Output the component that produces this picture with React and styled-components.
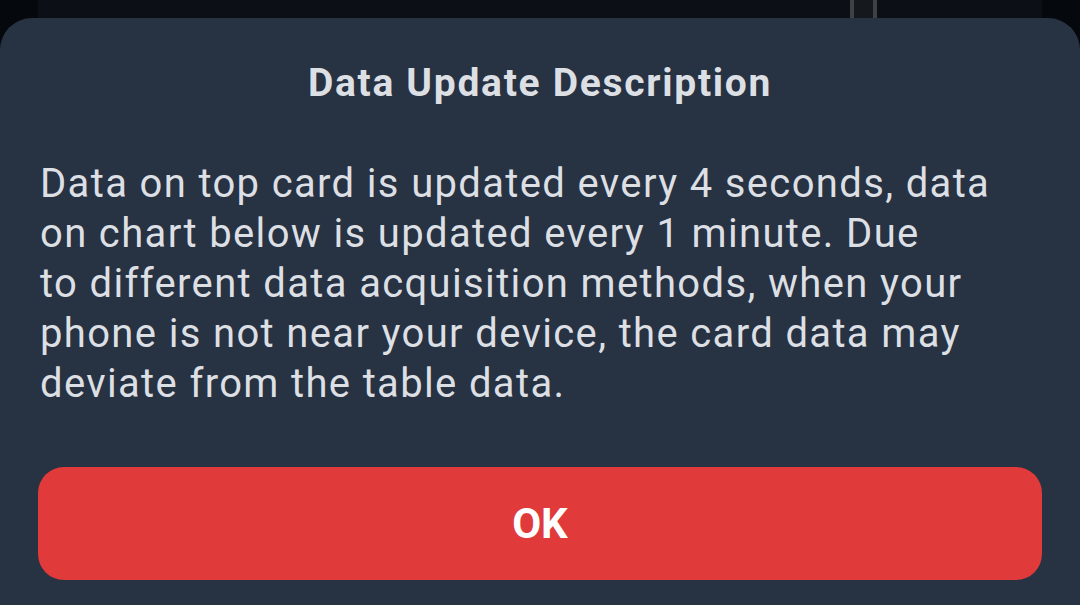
import React from 'react';
import styled, { createGlobalStyle } from 'styled-components';

const GlobalStyle = createGlobalStyle`
  html, body {
    margin: 0;
    padding: 0;
    background: #05080c;
  }
  body {
    font-family: Roboto, 'Noto Sans', sans-serif;
  }
`;

const Screen = styled.div`
  width: 1080px;
  height: 605px;
  display: flex;
  flex-direction: column;
  overflow: hidden;
  background: #05080c;
`;

// the page behind the sheet peeks out at the top
const Backdrop = styled.div`
  height: 18px;
  margin: 0 38px;
  background: #0c1016;
  display: flex;
  flex-shrink: 0;
`;

const ChartStub = styled.div`
  width: 19px;
  margin-left: 812px;
  background: #15181c;
  border-left: 4px solid #3e4246;
  border-right: 4px solid #3e4246;
`;

const Sheet = styled.div`
  flex: 1;
  background: #273242;
  border-radius: 32px 32px 0 0;
  padding: 45px 38px 0 38px;
  display: flex;
  flex-direction: column;
`;

const Title = styled.h2`
  margin: 0;
  font-size: 39px;
  line-height: 40px;
  font-weight: 700;
  letter-spacing: 1.7px;
  color: #dcdfe3;
  text-align: center;
`;

const Body = styled.p`
  margin: 56px 0 0 2px;
  font-size: 40px;
  line-height: 50px;
  font-weight: 400;
  letter-spacing: 1.35px;
  color: #dcdfe3;
  white-space: nowrap;
`;

const OkButton = styled.button`
  margin-top: 58px;
  height: 113px;
  border: none;
  border-radius: 26px;
  background: #e03a3a;
  color: #ffffff;
  font-family: Roboto, 'Noto Sans', sans-serif;
  font-size: 42px;
  font-weight: 700;
  cursor: pointer;
`;

const lines = [
  'Data on top card is updated every 4 seconds, data',
  'on chart below is updated every 1 minute. Due',
  'to different data acquisition methods, when your',
  'phone is not near your device, the card data may',
  'deviate from the table data.',
];

export default function App() {
  return (
    <>
      <GlobalStyle />
      <Screen>
        <Backdrop>
          <ChartStub />
        </Backdrop>
        <Sheet>
          <Title>Data Update Description</Title>
          <Body>
            {lines.map((l, i) => (
              <React.Fragment key={i}>
                {l}
                {i < lines.length - 1 && <br />}
              </React.Fragment>
            ))}
          </Body>
          <OkButton>OK</OkButton>
        </Sheet>
      </Screen>
    </>
  );
}
